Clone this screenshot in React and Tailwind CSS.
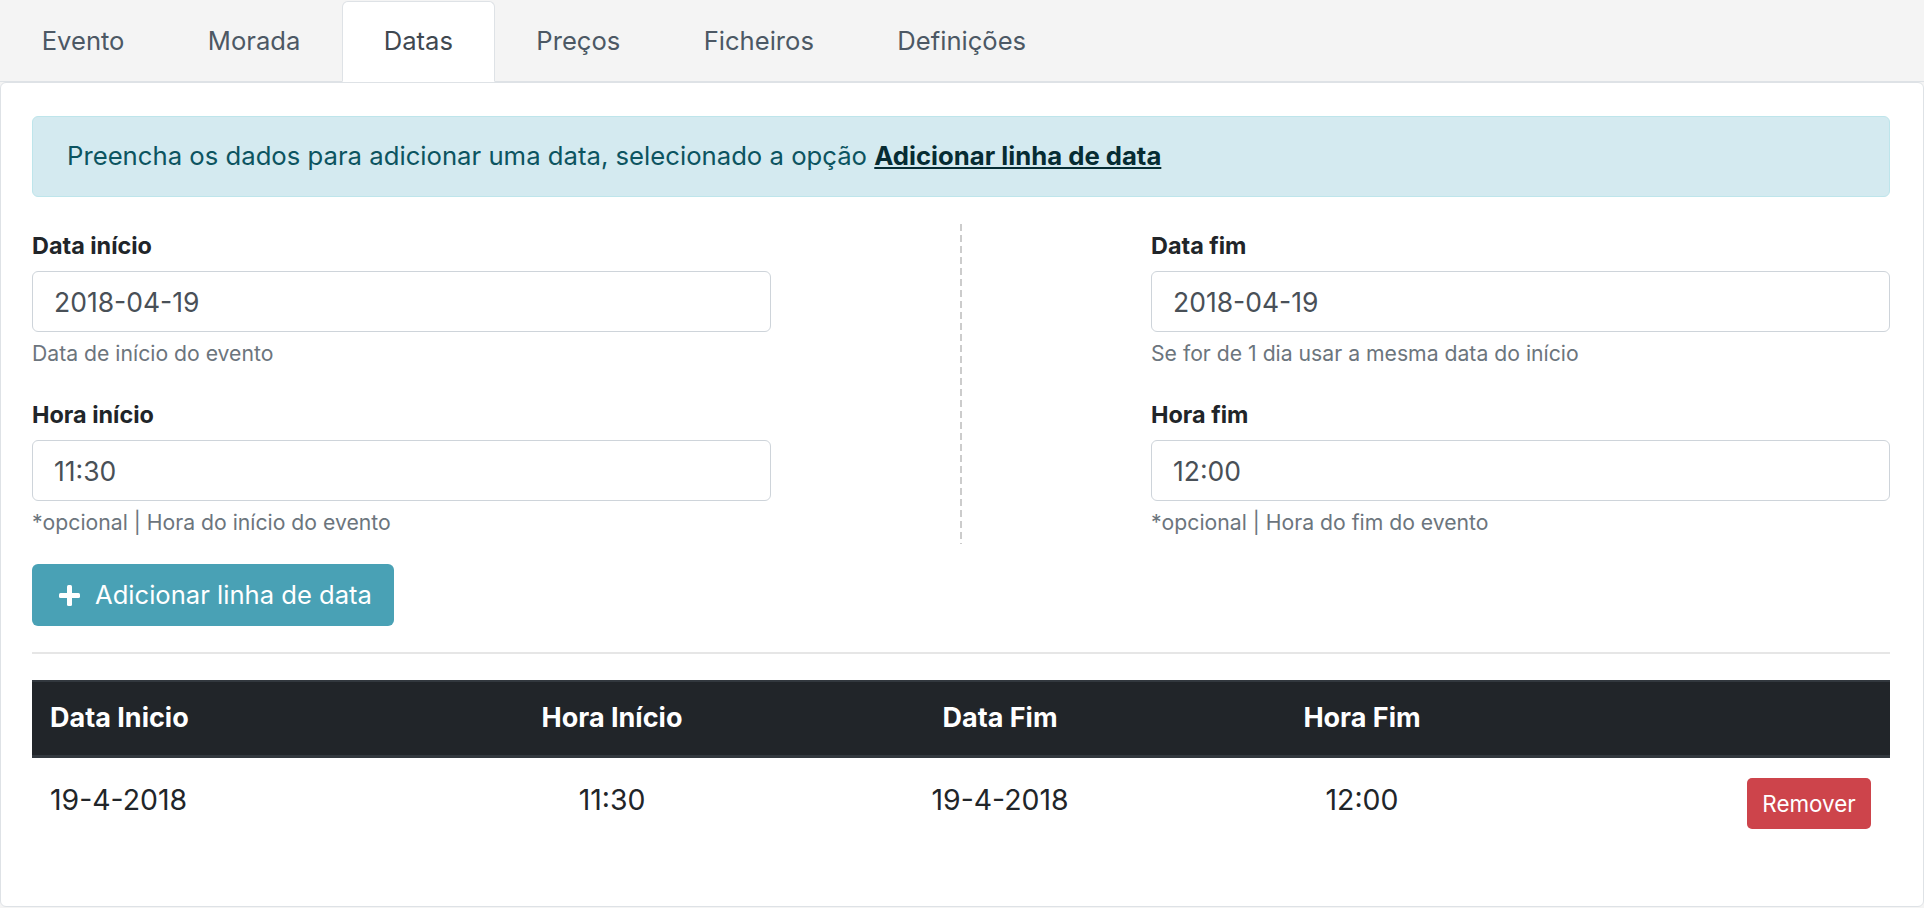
import { useState } from 'react'

// Tabs of the event editor
const TABS = ['Evento', 'Morada', 'Datas', 'Preços', 'Ficheiros', 'Definições']

// Saved date lines
const DATE_ROWS = [
  { id: 1, dataInicio: '19-4-2018', horaInicio: '11:30', dataFim: '19-4-2018', horaFim: '12:00' },
]

const PlusIcon = () => (
  <svg width="21" height="21" viewBox="0 0 21 21" fill="white">
    <rect x="0" y="8" width="21" height="5" rx="1.5" />
    <rect x="8" y="0" width="5" height="21" rx="1.5" />
  </svg>
)

const Field = ({ label, value, help }) => (
  <div className="flex flex-col">
    <label className="text-[23.4px] leading-[34px] font-bold text-[#212529]">{label}</label>
    <input
      readOnly
      value={value}
      className="mt-2 h-[61px] w-full rounded-[6px] border border-[#ced4da] bg-white px-[21px] text-[26.5px] text-[#495057] outline-none"
    />
    <small className="mt-1 text-[21.2px] leading-[34px] text-[#6c757d]">{help}</small>
  </div>
)

export default function App() {
  const [activeTab, setActiveTab] = useState('Datas')
  const [rows, setRows] = useState(DATE_ROWS)

  return (
    <div className="w-[1924px] h-[908px] overflow-hidden bg-[#f4f4f4] font-['Inter','Liberation_Sans',sans-serif]">
      {/* Tabs */}
      <div className="flex h-[82px] pt-px border-b border-[#dee2e6]">
        {TABS.map(tab => (
          <button
            key={tab}
            onClick={() => setActiveTab(tab)}
            className={`h-[81px] px-[40.7px] rounded-t-[6px] border text-[25.6px] ${
              activeTab === tab
                ? 'bg-white border-[#dee2e6] border-b-transparent text-[#3f4850]'
                : 'border-transparent text-[#4c5864]'
            }`}
          >
            {tab}
          </button>
        ))}
      </div>

      {/* Card */}
      <div className="h-[825px] bg-white border border-[#dee2e6] rounded-[6px] pt-[33px] pl-[31px] pr-[33px]">
        <div className="h-[81px] flex items-center rounded-[6px] border border-[#bee5eb] bg-[#d4eaf0] px-[34px] text-[25.7px] text-[#0c5460]">
          <span>
            Preencha os dados para adicionar uma data, selecionado a opção{' '}
            <a href="#" className="font-bold underline text-[#062c33]">Adicionar linha de data</a>
          </span>
        </div>

        {/* Form */}
        <div className="mt-[27px] grid grid-cols-[1fr_2px_1fr] gap-x-[189px]">
          <div className="py-[5px] flex flex-col gap-[28px]">
            <Field label="Data início" value="2018-04-19" help="Data de início do evento" />
            <Field label="Hora início" value="11:30" help="*opcional | Hora do início do evento" />
          </div>
          <div className="bg-[repeating-linear-gradient(to_bottom,#cccccc_0px,#cccccc_7px,transparent_7px,transparent_11px)]" />
          <div className="py-[5px] flex flex-col gap-[28px]">
            <Field label="Data fim" value="2018-04-19" help="Se for de 1 dia usar a mesma data do início" />
            <Field label="Hora fim" value="12:00" help="*opcional | Hora do fim do evento" />
          </div>
        </div>

        <button className="mt-[20px] h-[62px] flex items-center gap-[15px] rounded-[6px] bg-[#49a1b5] pl-[27px] pr-[22px] text-[25.6px] text-white">
          <PlusIcon />
          <span>Adicionar linha de data</span>
        </button>

        <div className="mt-[26px] h-[2px] bg-[#e6e6e6]" />

        {/* Table */}
        <div className="mt-[26px]">
          <div className="grid grid-cols-[398px_364px_412px_312px_1fr] h-[78px] items-center bg-[#212529] border-t-2 border-b-[3px] border-[#32383e] text-[27px] font-bold text-white">
            <div className="pl-[18px]">Data Inicio</div>
            <div className="text-center">Hora Início</div>
            <div className="text-center">Data Fim</div>
            <div className="text-center">Hora Fim</div>
            <div />
          </div>
          {rows.map(row => (
            <div key={row.id} className="grid grid-cols-[398px_364px_412px_312px_1fr] h-[84px] items-center text-[28.4px] text-[#212529]">
              <div className="pl-[18px]">{row.dataInicio}</div>
              <div className="text-center">{row.horaInicio}</div>
              <div className="text-center">{row.dataFim}</div>
              <div className="text-center">{row.horaFim}</div>
              <div className="flex justify-end pr-[19px] pt-[7px]">
                <button
                  onClick={() => setRows(rows.filter(r => r.id !== row.id))}
                  className="h-[51px] w-[124px] rounded-[5px] bg-[#cd444b] text-[22.4px] text-white"
                >
                  Remover
                </button>
              </div>
            </div>
          ))}
        </div>
      </div>
    </div>
  )
}
